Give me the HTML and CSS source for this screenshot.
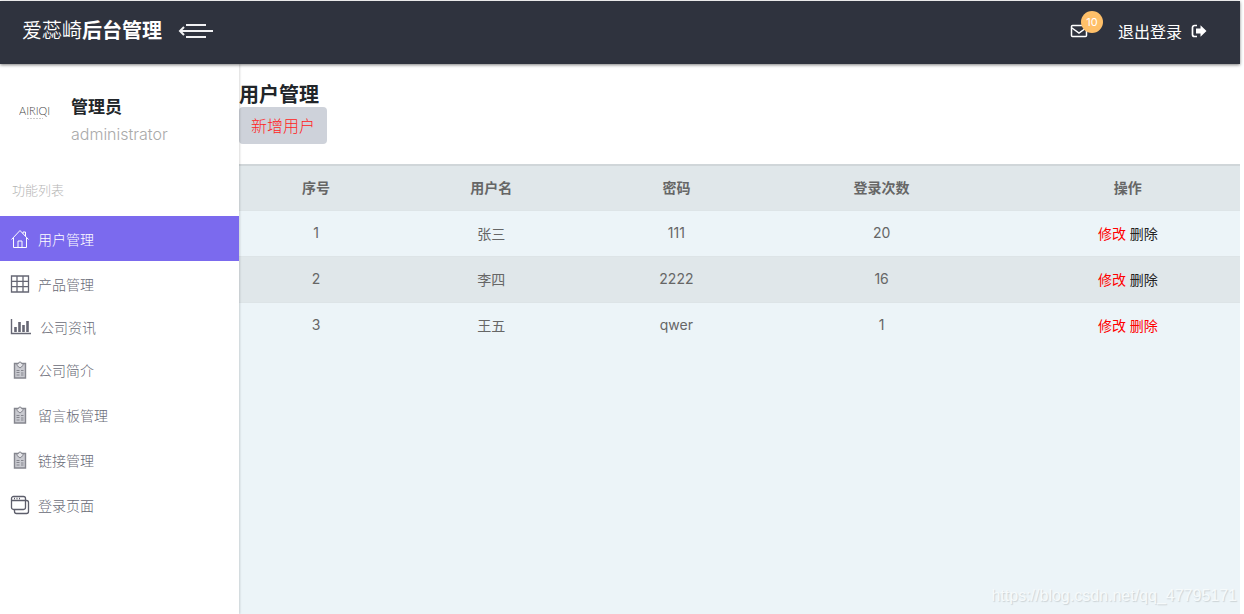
FILE: index.html
```html
<!DOCTYPE html>
<html lang="zh-CN">
<head>
    <meta charset="UTF-8">
    <meta name="viewport" content="width=device-width, initial-scale=1.0">
    <title>爱蕊崎后台管理</title>
    <link rel="stylesheet" href="styles.css">
</head>
<body>

    <!-- icon shared by several menu items -->
    <svg class="symbols" width="0" height="0">
        <symbol id="clipboard" viewBox="0 0 20 20">
            <path fill="#c9cad0" stroke="#85868e" stroke-width="1.400" d="M4.500 3.500h11v14.500h-11z"/>
            <path fill="#e4e4e8" stroke="#85868e" d="M7 5.500V3.500h1.500a1.500 1.500 0 0 1 3 0H13v2l-3 2.500z"/>
            <path fill="none" stroke="#85868e" d="M6.500 10.500h3M6.500 12.500h3M6.500 15h3M11 10.500h2.500M11 13h2.500M11 15h2.500"/>
        </symbol>
    </svg>

    <header class="topbar">
        <a href="#" class="logo">爱蕊崎<b>后台管理</b></a>
        <button type="button" class="toggle-btn" aria-label="菜单">
            <svg width="36" height="18" viewBox="0 0 36 18" fill="none" stroke="#f1f1f3" stroke-width="2">
                <path d="M8 3h20M2 9h33M8 15h20"/>
                <path d="M6 5L2 9l4 4"/>
            </svg>
        </button>
        <div class="topbar-right">
            <a href="#" class="mail" aria-label="消息">
                <svg width="18" height="16" viewBox="0 0 18 16" fill="none" stroke="#fff" stroke-width="1.500">
                    <rect x="1.500" y="2.500" width="15" height="11" rx="1"/>
                    <path d="M2 5l7 5 7-5"/>
                </svg>
                <span class="badge">10</span>
            </a>
            <a href="#" class="logout">退出登录
                <svg width="16" height="14" viewBox="0 0 16 14">
                    <path fill="none" stroke="#fff" stroke-width="1.700" d="M6 1.500H3.500a2 2 0 0 0-2 2v7a2 2 0 0 0 2 2H6"/>
                    <path fill="#fff" d="M5 4.500h4.500V1.200L15.500 7l-6 5.800V9.500H5z"/>
                </svg>
            </a>
        </div>
    </header>

    <div class="wrapper">
        <nav class="sidebar">
            <div class="profile">
                <svg class="avatar" width="34" height="18" viewBox="0 0 34 18" aria-label="AIRIQI">
                    <text x="0" y="11" class="avatar-name">AIRIQI</text>
                    <path stroke="#ccc" stroke-dasharray="2 1" d="M8 14.500h16"/>
                </svg>
                <div>
                    <div class="profile-name">管理员</div>
                    <div class="profile-role">administrator</div>
                </div>
            </div>
            <div class="menu-title">功能列表</div>
            <ul class="menu">
                <li>
                    <a href="#" class="active">
                        <svg width="20" height="20" viewBox="0 0 20 20" fill="none" stroke="currentColor">
                            <path d="M1.500 10.500L10 1.500l8.500 9M3.500 9v9.500h13V9M8 18.500V12h4v6.500M13 4.500V3h2.500v4"/>
                        </svg>
                        用户管理
                    </a>
                </li>
                <li>
                    <a href="#">
                        <svg width="20" height="20" viewBox="0 0 20 20" fill="none" stroke="#666774" stroke-width="1.300">
                            <path d="M1.500 2h17v16h-17zM7 2v16M13 2v16M1.500 7.300h17M1.500 12.700h17"/>
                        </svg>
                        产品管理
                    </a>
                </li>
                <li>
                    <a href="#" class="news">
                        <svg width="22" height="20" viewBox="0 0 22 20" fill="none" stroke="#666774">
                            <path d="M1.500 2v14.500H21" stroke-width="1.400"/>
                            <path d="M5.500 10v5M9.500 5v10M13.500 8v7M17.500 4v11" stroke-width="2.600"/>
                        </svg>
                        公司资讯
                    </a>
                </li>
                <li><a href="#"><svg width="20" height="20"><use href="#clipboard"/></svg>公司简介</a></li>
                <li><a href="#"><svg width="20" height="20"><use href="#clipboard"/></svg>留言板管理</a></li>
                <li><a href="#"><svg width="20" height="20"><use href="#clipboard"/></svg>链接管理</a></li>
                <li>
                    <a href="#">
                        <svg width="20" height="20" viewBox="0 0 20 20" fill="none" stroke="#5d5e6b" stroke-width="1.300">
                            <rect x="1.500" y="1.500" width="14" height="13" rx="2"/>
                            <path d="M1.500 5.500h14M4 3.500h1M6.500 3.500h1M9 3.500h1M15.500 5.500h1a2 2 0 0 1 2 2v9a2 2 0 0 1-2 2h-10a2 2 0 0 1-2-2v-2"/>
                        </svg>
                        登录页面
                    </a>
                </li>
            </ul>
        </nav>

        <main class="content">
            <div class="page-head">
                <h1>用户管理</h1>
                <button type="button" class="add-btn">新增用户</button>
            </div>
            <table class="user-table">
                <thead>
                    <tr>
                        <th class="col-id">序号</th>
                        <th class="col-name">用户名</th>
                        <th class="col-pass">密码</th>
                        <th class="col-count">登录次数</th>
                        <th class="col-action">操作</th>
                    </tr>
                </thead>
                <tbody>
                    <tr>
                        <td>1</td>
                        <td>张三</td>
                        <td>111</td>
                        <td>20</td>
                        <td class="col-action"><a href="#" class="edit">修改</a> <a href="#">删除</a></td>
                    </tr>
                    <tr>
                        <td>2</td>
                        <td>李四</td>
                        <td>2222</td>
                        <td>16</td>
                        <td class="col-action"><a href="#" class="edit">修改</a> <a href="#">删除</a></td>
                    </tr>
                    <tr>
                        <td>3</td>
                        <td>王五</td>
                        <td>qwer</td>
                        <td>1</td>
                        <td class="col-action"><a href="#" class="edit">修改</a> <a href="#" class="edit">删除</a></td>
                    </tr>
                </tbody>
            </table>
            <div class="watermark">https://blog.csdn.net/qq_47795171</div>
        </main>
    </div>

</body>
</html>
```
FILE: styles.css
```css
* {
    box-sizing: border-box;
}

body {
    margin: 0;
    padding: 1px 4px 0 0;
    min-height: 100vh;
    display: flex;
    flex-direction: column;
    background-color: #fff;
    font-family: Inter, "Noto Sans CJK SC", sans-serif;
    font-size: 14px;
    color: #212529;
}

a {
    color: inherit;
    text-decoration: none;
}

button {
    font-family: inherit;
    border: none;
    cursor: pointer;
}

.symbols {
    position: absolute;
}

/* top bar */
.topbar {
    display: flex;
    align-items: center;
    height: 63px;
    padding: 0 33px 4px 22px;
    background-color: #2f333e;
    color: #fff;
    box-shadow: 0 1px 3px rgba(0, 0, 0, 0.5);
    z-index: 1;
}

.logo {
    font-size: 20px;
    line-height: 30px;
    font-weight: 350;
}

.logo b {
    font-weight: 700;
}

.toggle-btn {
    display: flex;
    margin-left: 16px;
    padding: 0;
    background: none;
}

.topbar-right {
    display: flex;
    align-items: center;
    gap: 30px;
    margin-left: auto;
}

.mail {
    position: relative;
    display: flex;
}

.badge {
    position: absolute;
    left: 11px;
    top: -12px;
    width: 22px;
    height: 22px;
    border-radius: 50%;
    background-color: #ffc069;
    font-size: 11px;
    line-height: 22px;
    text-align: center;
}

.logout {
    display: flex;
    align-items: center;
    gap: 9px;
    font-size: 16px;
}

.wrapper {
    display: flex;
    flex: 1;
}

/* sidebar */
.sidebar {
    width: 239px;
    flex-shrink: 0;
    box-shadow: 1px 0 2px rgba(0, 0, 0, 0.15);
    z-index: 0;
}

.profile {
    display: flex;
    gap: 18px;
    padding: 29px 19px 0;
}

.avatar {
    margin-top: 11px;
}

.avatar-name {
    font-family: Lato, sans-serif;
    font-size: 11px;
    font-weight: 300;
    fill: #444;
}

.profile-name {
    font-size: 17px;
    line-height: 28px;
    font-weight: 700;
}

.profile-role {
    font-size: 16px;
    line-height: 26px;
    font-weight: 300;
    color: #aaa;
}

.menu-title {
    margin: 33px 0 16px 12px;
    font-size: 13px;
    line-height: 20px;
    font-weight: 300;
    color: #b5b5b5;
}

.menu {
    margin: 0;
    padding: 0;
    list-style: none;
}

.menu a {
    display: flex;
    align-items: center;
    gap: 8px;
    height: 45px;
    padding-left: 10px;
    font-weight: 300;
    color: #686a76;
}

.menu a.active {
    background-color: #7b6aee;
    color: #fff;
}

.menu a.news {
    height: 41px;
}

/* main content */
.content {
    display: flex;
    flex-direction: column;
    flex: 1;
    background-color: #ecf4f8;
}

.page-head {
    padding: 19px 0 20px;
    background-color: #fff;
}

.page-head h1 {
    margin: 0;
    font-size: 20px;
    line-height: 24px;
    font-weight: 700;
}

.add-btn {
    height: 37px;
    padding: 0 12px 2px;
    border-radius: 4px;
    background-color: #ced2da;
    color: #f22;
    font-size: 16px;
    font-weight: 300;
}

.user-table {
    width: 100%;
    border-spacing: 0;
    table-layout: fixed;
    text-align: center;
    color: #666;
}

.user-table th,
.user-table td {
    height: 46px;
    padding: 0 0 2px 4px;
    border-top: 1px solid #dde4e7;
}

.user-table th {
    font-weight: 700;
    border-top: 2px solid #d0d6d9;
}

.user-table thead tr,
.user-table tbody tr:nth-child(even) {
    background-color: #e0e7ea;
}

.col-id {
    width: 15%;
}

.col-name {
    width: 20%;
}

.col-pass {
    width: 17%;
}

.col-count {
    width: 24%;
}

.user-table .col-action {
    padding-left: 16px;
}

td a {
    color: #222;
}

td a.edit {
    color: #f00;
}

.watermark {
    margin: auto 3px 8px auto;
    font-family: "Liberation Sans", Arial, sans-serif;
    font-size: 16px;
    line-height: 20px;
    color: #f6fafb;
    text-shadow: 1px 1px 1px #ccd3d6;
}
```
